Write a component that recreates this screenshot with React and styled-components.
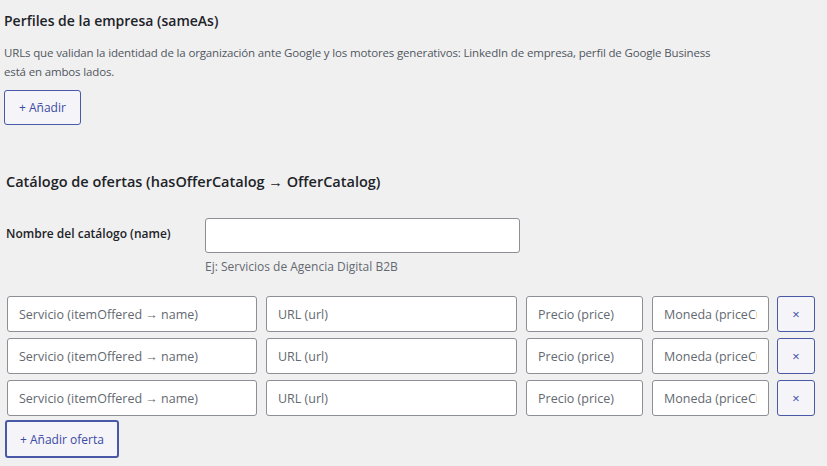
import React from "react";
import styled, { createGlobalStyle } from "styled-components";

const Global = createGlobalStyle`
  html, body { margin: 0; padding: 0; background: #f0f0f1; }
  body {
    font-family: "Open Sans", "Noto Sans", "Liberation Sans", sans-serif;
    color: #1d2327;
    font-size: 13px;
  }
  * { box-sizing: border-box; }
`;

const Page = styled.div`
  padding: 11px 0 0 4px;
  width: 827px;
  height: 466px;
  overflow: hidden;
`;

const Section = styled.section`
  padding-left: ${(p) => p.$indent || 0}px;
  margin-bottom: ${(p) => p.$gap || 0}px;
`;

const Heading = styled.h2`
  margin: 0;
  font-size: ${(p) => p.$size || 14}px;
  line-height: 20px;
  font-weight: 600;
  color: #1d2327;
`;

const Description = styled.p`
  margin: 12px 0 9px;
  max-width: 712px;
  font-size: 11.5px;
  line-height: 19px;
  color: #50575e;
  letter-spacing: -0.15px;
`;

const Button = styled.button`
  font-family: inherit;
  font-size: 12px;
  font-weight: ${(p) => (p.$focus ? 500 : 400)};
  color: #3c4ba3;
  background: #f4f4f9;
  border: ${(p) => (p.$focus ? "2px" : "1px")} solid #4a58a8;
  border-radius: 3px;
  height: ${(p) => p.$h || 35}px;
  padding: 0 ${(p) => p.$px || 14}px;
  cursor: pointer;
  display: inline-flex;
  align-items: center;
  justify-content: center;
`;

const FieldRow = styled.div`
  display: grid;
  grid-template-columns: 199px 315px;
  align-items: center;
  margin-top: 26px;
`;

const Label = styled.label`
  font-weight: 600;
  font-size: 12px;
  color: #1d2327;
  align-self: start;
  padding-top: 7px;
`;

const Input = styled.input`
  font-family: inherit;
  font-size: 12.5px;
  height: ${(p) => p.$h || 36}px;
  width: ${(p) => p.$w || 250}px;
  padding: 0 11px;
  border: 1px solid #8c8f94;
  border-radius: 3px;
  background: #fff;
  color: #2c3338;
  outline: none;
  &::placeholder { color: #646970; }
`;

const Hint = styled.div`
  grid-column: 2;
  font-size: 12px;
  color: #646970;
  margin-top: 5px;
  line-height: 18px;
`;

const Rows = styled.div`
  display: flex;
  flex-direction: column;
  gap: 6px;
  margin-top: 20px;
  padding-left: 1px;
`;

const OfferRow = styled.div`
  display: flex;
  align-items: center;
  gap: 9px;
`;

const RemoveButton = styled(Button)`
  width: 38px;
  height: 36px;
  padding: 0;
  margin-left: -1px;
  font-size: 13px;
`;

const AddWrap = styled.div`
  margin-top: 4px;
  margin-left: -1px;
`;

const offers = [0, 1, 2];

export default function App() {
  return (
    <>
      <Global />
      <Page>
        <Section $gap={47}>
          <Heading $size={14}>Perfiles de la empresa (sameAs)</Heading>
          <Description>
            URLs que validan la identidad de la organización ante Google y los motores generativos: LinkedIn de empresa, perfil de Google Business está en ambos lados.
          </Description>
          <Button $px={14}>+ Añadir</Button>
        </Section>
        <Section $indent={2}>
          <Heading $size={14.5}>Catálogo de ofertas (hasOfferCatalog → OfferCatalog)</Heading>
          <FieldRow>
            <Label>Nombre del catálogo (name)</Label>
            <Input $w={315} $h={35} />
            <Hint>Ej: Servicios de Agencia Digital B2B</Hint>
          </FieldRow>
          <Rows>
            {offers.map((i) => (
              <OfferRow key={i}>
                <Input $w={250} placeholder="Servicio (itemOffered → name)" />
                <Input $w={251} placeholder="URL (url)" />
                <Input $w={117} placeholder="Precio (price)" />
                <Input $w={117} placeholder="Moneda (priceCurrency)" />
                <RemoveButton>×</RemoveButton>
              </OfferRow>
            ))}
          </Rows>
          <AddWrap>
            <Button $focus $h={38} $px={13}>+ Añadir oferta</Button>
          </AddWrap>
        </Section>
      </Page>
    </>
  );
}
